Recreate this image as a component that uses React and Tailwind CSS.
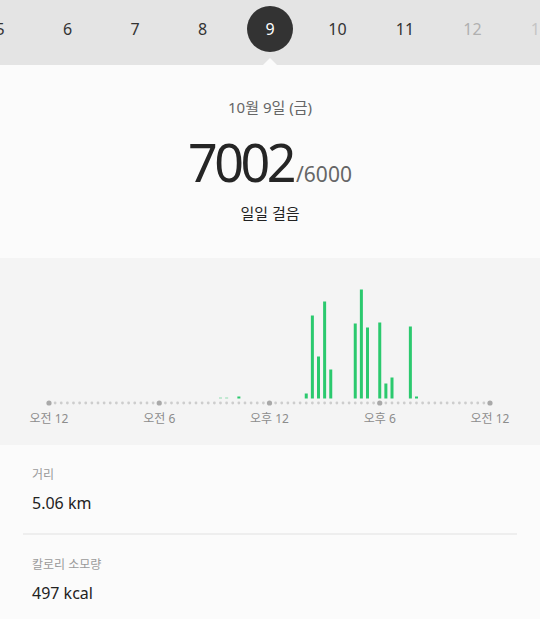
const FONT = { fontFamily: '"Noto Sans", "Noto Sans CJK KR", sans-serif' }

const days = [
  { n: 5, tone: 'text-[#333]' },
  { n: 6, tone: 'text-[#333]' },
  { n: 7, tone: 'text-[#333]' },
  { n: 8, tone: 'text-[#333]' },
  { n: 9, active: true },
  { n: 10, tone: 'text-[#333]' },
  { n: 11, tone: 'text-[#333]' },
  { n: 12, tone: 'text-[#b0b0b0]' },
  { n: 13, tone: 'text-[#c4c4c4]' },
]

// index of 20-minute slot -> bar height in px
const bars = {
  28: 1, 29: 1, 31: 2,
  42: 5, 43: 83, 44: 42, 45: 97, 46: 29,
  50: 75, 51: 109, 52: 71,
  54: 76, 55: 15, 56: 21,
  59: 72, 60: 2,
}

const X0 = 49
const STEP = 441 / 72

function StepChart() {
  const dots = []
  for (let i = 0; i <= 72; i++) {
    const major = i % 18 === 0
    dots.push(
      <circle
        key={i}
        cx={X0 + i * STEP}
        cy={145}
        r={major ? 2.6 : 1.4}
        fill={major ? '#a9a9a9' : '#cdcdcd'}
      />
    )
  }
  return (
    <svg width="540" height="150" className="block">
      {dots}
      {Object.entries(bars).map(([i, h]) => (
        <rect
          key={i}
          x={X0 + Number(i) * STEP - 1.5}
          y={140.5 - h}
          width="3"
          height={h}
          fill={h <= 1 ? '#8fdcb0' : '#2bc96e'}
        />
      ))}
    </svg>
  )
}

function StatRow({ label, value }) {
  return (
    <div className="px-[9px]">
      <div className="text-[12px] leading-[16px] text-[#9a9a9a]">{label}</div>
      <div className="mt-[9px] text-[16px] leading-[22px] text-[#222]">{value}</div>
    </div>
  )
}

export default function App() {
  return (
    <div className="w-[540px] h-[619px] overflow-hidden bg-[#fbfbfb]" style={FONT}>
      {/* date strip */}
      <div className="relative h-[65px] bg-[#e4e4e4] overflow-hidden">
        <div className="flex h-full items-center ml-[-33.75px] pb-[7px]">
          {days.map((d) => (
            <div key={d.n} className="w-[67.5px] shrink-0 flex justify-center">
              {d.active ? (
                <div className="w-[46px] h-[46px] rounded-full bg-[#333] text-white flex items-center justify-center text-[16px]">
                  {d.n}
                </div>
              ) : (
                <span className={`text-[16px] ${d.tone}`}>{d.n}</span>
              )}
            </div>
          ))}
        </div>
        <div className="absolute left-[262.5px] bottom-0 w-0 h-0 border-l-[7.5px] border-r-[7.5px] border-b-[7px] border-l-transparent border-r-transparent border-b-[#fbfbfb]" />
      </div>

      {/* summary */}
      <div className="h-[193px] pt-[32px] flex flex-col items-center">
        <div className="text-[15px] leading-[20px] text-[#666]">10월 9일 (금)</div>
        <div className="mt-[19px] flex items-baseline leading-none">
          <span className="text-[52px] tracking-[-3.5px] text-[#252525]">7002</span>
          <span className="text-[21px] text-[#666] ml-[3px]">/6000</span>
        </div>
        <div className="mt-[15px] text-[15px] leading-[20px] text-[#222]">일일 걸음</div>
      </div>

      {/* chart */}
      <div className="h-[187px] bg-[#f4f4f4]">
        <StepChart />
        <div className="mt-[1px] ml-[19px] w-[501px] flex justify-between">
          {['오전 12', '오전 6', '오후 12', '오후 6', '오전 12'].map((t, i) => (
            <div key={i} className="w-[60px] text-center text-[12px] leading-[20px] text-[#8c8c8c]">
              {t}
            </div>
          ))}
        </div>
      </div>

      {/* stats */}
      <div className="px-[23px] pt-[22px]">
        <StatRow label="거리" value="5.06 km" />
        <div className="mt-[19px] h-[2px] bg-[#eeeeee]" />
        <div className="pt-[22px]">
          <StatRow label="칼로리 소모량" value="497 kcal" />
        </div>
      </div>
    </div>
  )
}
